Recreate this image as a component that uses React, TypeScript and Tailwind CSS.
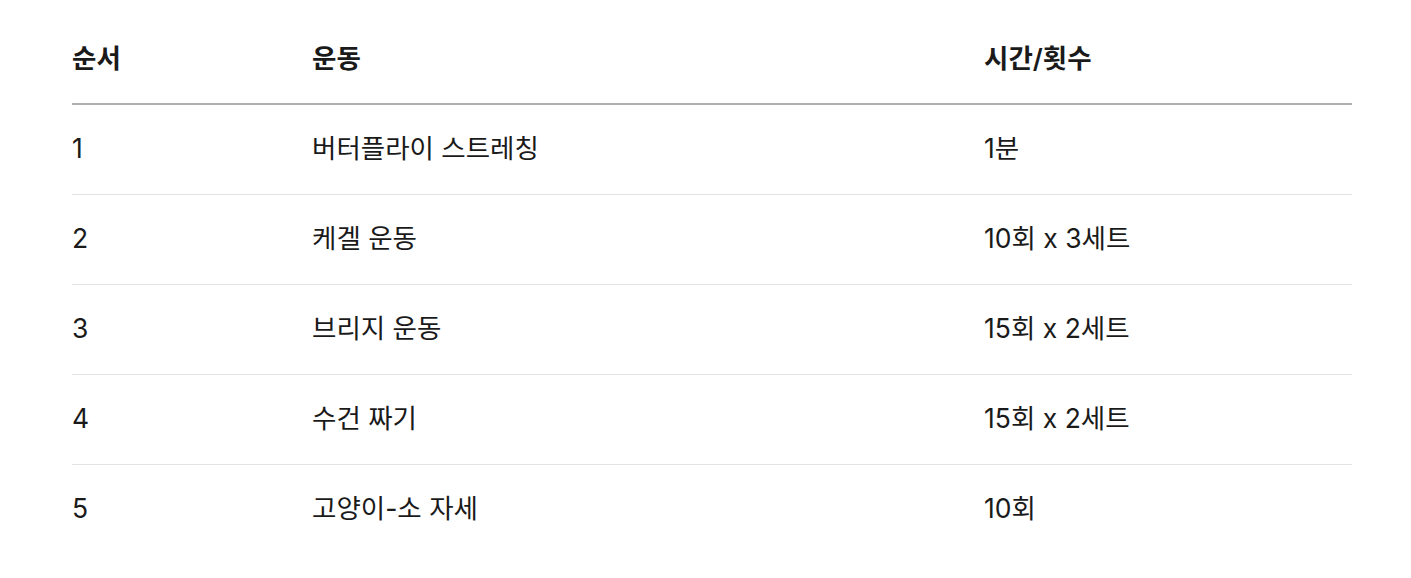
const rows = [
  { n: "1", name: "버터플라이 스트레칭", time: "1분" },
  { n: "2", name: "케겔 운동", time: "10회 x 3세트" },
  { n: "3", name: "브리지 운동", time: "15회 x 2세트" },
  { n: "4", name: "수건 짜기", time: "15회 x 2세트" },
  { n: "5", name: "고양이-소 자세", time: "10회" },
];

export default function App() {
  return (
    <div
      className="min-h-screen bg-white pl-[72px] pr-[59px] pt-[15px] text-[#1a1a1a]"
      style={{ fontFamily: 'Inter, "Noto Sans CJK KR", sans-serif' }}
    >
      <table className="w-full border-collapse text-left text-[26.5px]">
        <thead>
          <tr className="h-[89px] border-b-2 border-[#b0b0b0]">
            <th className="w-[240px] p-0 font-semibold">순서</th>
            <th className="w-[672px] p-0 font-semibold">운동</th>
            <th className="p-0 font-semibold">시간/횟수</th>
          </tr>
        </thead>
        <tbody>
          {rows.map((r, i) => (
            <tr
              key={r.n}
              className={
                i < rows.length - 1
                  ? "h-[90px] border-b border-[#e3e3e3]"
                  : "h-[90px]"
              }
            >
              <td className="p-0">{r.n}</td>
              <td className="p-0">{r.name}</td>
              <td className="p-0">{r.time}</td>
            </tr>
          ))}
        </tbody>
      </table>
    </div>
  );
}
